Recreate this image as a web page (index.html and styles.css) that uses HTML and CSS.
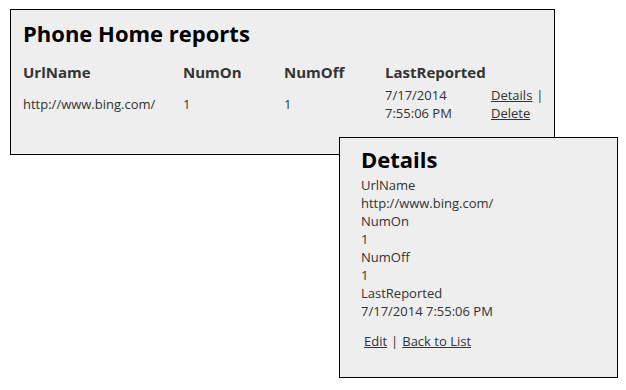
FILE: index.html
```html
<!DOCTYPE html>
<html>
<head>
<meta charset="utf-8">
<title>Phone Home reports</title>
<link rel="stylesheet" href="styles.css">
</head>
<body>
<div class="desk">
  <div class="window list-window">
    <h2 class="title">Phone Home reports</h2>
    <table class="grid">
      <thead>
        <tr>
          <th class="c-url">UrlName</th>
          <th class="c-on">NumOn</th>
          <th class="c-off">NumOff</th>
          <th class="c-last">LastReported</th>
          <th class="c-act"></th>
        </tr>
      </thead>
      <tbody>
        <tr>
          <td>http://www.bing.com/</td>
          <td>1</td>
          <td>1</td>
          <td>7/17/2014 7:55:06 PM</td>
          <td><a href="#">Details</a><span class="sep">|</span> <a href="#">Delete</a></td>
        </tr>
      </tbody>
    </table>
  </div>

  <div class="window details-window">
    <h2 class="title">Details</h2>
    <dl class="fields">
      <dt>UrlName</dt>
      <dd>http://www.bing.com/</dd>
      <dt>NumOn</dt>
      <dd>1</dd>
      <dt>NumOff</dt>
      <dd>1</dd>
      <dt>LastReported</dt>
      <dd>7/17/2014 7:55:06 PM</dd>
    </dl>
    <p class="actions"><a href="#">Edit</a><span class="sep sep-mid">|</span><a href="#">Back to List</a></p>
  </div>
</div>
</body>
</html>
```

FILE: styles.css
```css
html, body {
  margin: 0;
  padding: 0;
  background: #ffffff;
}

body {
  font-family: "Open Sans", "Noto Sans", sans-serif;
  font-size: 13px;
  color: #333333;
}

.desk {
  position: relative;
  width: 626px;
  height: 390px;
  padding: 9px 0 0 10px;
  box-sizing: border-box;
}

.window {
  background: #eeeeee;
  border: 1px solid #000000;
  box-sizing: border-box;
}

.list-window {
  width: 545px;
  height: 146px;
  padding: 8px 12px 0 12px;
}

.details-window {
  position: absolute;
  left: 339px;
  top: 137px;
  width: 279px;
  height: 241px;
  padding: 6px 20px 0 21px;
}

.title {
  margin: 0;
  font-size: 22px;
  line-height: 30px;
  font-weight: 700;
  color: #000000;
}

.list-window .title {
  margin-bottom: 14px;
}

.grid {
  border-collapse: collapse;
  border-spacing: 0;
  table-layout: fixed;
  width: 520px;
}

.grid th {
  padding: 0;
  text-align: left;
  font-size: 15px;
  line-height: 20px;
  font-weight: 700;
  color: #333333;
}

.grid td {
  padding: 4px 0 0 0;
  line-height: 18px;
  vertical-align: middle;
}

.c-url { width: 160px; }
.c-on { width: 101px; }
.c-off { width: 101px; }
.c-last { width: 106px; }
.c-act { width: 52px; }

a {
  color: #333333;
  text-decoration: underline;
}

.sep {
  margin-left: 4px;
}

.sep-mid {
  margin-right: 4px;
}

.fields {
  margin: 2px 0 0 0;
  line-height: 18px;
}

.fields dt,
.fields dd {
  margin: 0;
  font-weight: 400;
}

.actions {
  margin: 12px 0 0 3px;
  line-height: 18px;
}
```
